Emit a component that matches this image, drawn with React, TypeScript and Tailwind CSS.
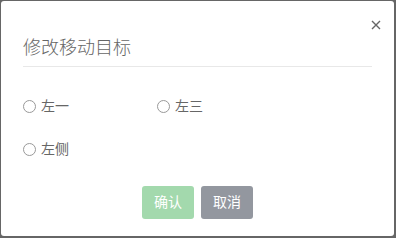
export default function App() {
  return (
    <div
      className="w-[396px] h-[238px] bg-[#666] pt-[1px] pl-[1px] pr-[2px] pb-[2px]"
      style={{ fontFamily: '"Liberation Sans", "Noto Sans CJK SC", sans-serif' }}
    >
      <div className="relative h-full bg-white rounded-[3px] px-[22px] pt-[35px]">
        <button className="absolute right-[13px] top-[19px] text-[#666]">
          <svg width="10" height="10" viewBox="0 0 10 10" stroke="currentColor" strokeWidth="1.4">
            <path d="M1 1L9 9M9 1L1 9" />
          </svg>
        </button>
        <h2 className="text-[18px] leading-[24px] text-[#666] font-light pb-[6px] border-b border-[#e8e8e8]">
          修改移动目标
        </h2>
        <div className="grid grid-cols-[134px_1fr] gap-y-[23px] mt-[29px] text-[14px] leading-[20px] text-[#666]">
          {["左一", "左三", "左侧"].map((t) => (
            <label key={t} className="flex items-center gap-[5px]">
              <span className="w-[13px] h-[13px] rounded-full border border-[#999] bg-white" />
              {t}
            </label>
          ))}
        </div>
        <div className="flex justify-center gap-[7px] mt-[27px]">
          <button className="w-[52px] h-[33px] rounded-[3px] bg-[#a3d9ad] text-white text-[14px]">
            确认
          </button>
          <button className="w-[52px] h-[33px] rounded-[3px] bg-[#93979f] text-white text-[14px]">
            取消
          </button>
        </div>
      </div>
    </div>
  );
}
